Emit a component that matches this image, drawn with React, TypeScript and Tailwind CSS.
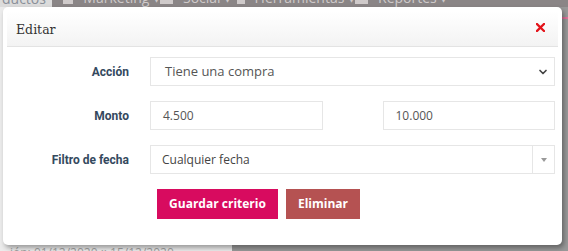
import { ChevronDown } from "lucide-react";

const navItems = [
  { label: "Marketing", w: "w-[97px]" },
  { label: "Social", w: "w-[77px]" },
  { label: "Herramientas", w: "w-[118px]" },
  { label: "Reportes", w: "w-[100px]" },
];

function Backdrop() {
  return (
    <div className="flex h-full flex-col">
      <div className="flex h-[7px] overflow-hidden">
        <div className="w-[52px] bg-[#dcdcdc]">
          <p className="-mt-[12px] pl-[2px] font-['Open_Sans',sans-serif] text-[14px] text-[#8a8f99]">
            ductos ▾
          </p>
        </div>
        <div className="flex flex-1 bg-[#8a8586] pl-[11px]">
          {navItems.map((item) => (
            <div
              key={item.label}
              className={`-mt-[12px] flex h-[19px] shrink-0 items-end gap-[10px] ${item.w} font-['Open_Sans',sans-serif] text-[14px] leading-[19px] text-[#cfcaca]`}
            >
              <span className="mb-[3px] h-[12px] w-[13px] bg-[#cfcaca]" />
              <span className="whitespace-nowrap">{item.label} ▾</span>
            </div>
          ))}
        </div>
        <div className="w-[6px] bg-[#8a8586]" />
      </div>
      <div className="flex flex-1">
        <div className="flex w-[232px] flex-col justify-end bg-[#ececec] font-['Open_Sans',sans-serif] text-[12px] text-[#a3a3a3]">
          <p className="-mb-[11px] whitespace-nowrap pl-[10px]">ión: 01/12/2020 :: 15/12/2020</p>
        </div>
        <div className="flex flex-1 flex-col items-end bg-[#999999]">
          <span className="mt-[10px] h-[2px] w-[6px] bg-[#e0739c]" />
        </div>
      </div>
    </div>
  );
}

export default function App() {
  return (
    <div className="relative h-[251px] w-[568px] overflow-hidden">
      <Backdrop />
      <div className="absolute left-[3px] top-[7px] flex h-[238px] w-[559px] flex-col rounded-[5px] bg-white shadow-[2px_3px_5px_rgba(0,0,0,0.35)]">
        <div className="mx-[4px] mt-[4px] flex h-[36px] items-center justify-between border-b border-[#e3e3e3] bg-gradient-to-b from-white to-[#f3f3f3] pl-[9px] pr-[13px]">
          <h2 className="mt-[3px] font-['DejaVu_Serif',serif] text-[12.5px] text-[#333]">Editar</h2>
          <svg width="9" height="9" viewBox="0 0 9 9" className="mt-[-3px]">
            <path d="M1 1 L8 8 M8 1 L1 8" stroke="#e3141b" strokeWidth="2.3" strokeLinecap="square" />
          </svg>
        </div>

        <div className="flex flex-col gap-[15px] pl-[4px] pr-[7px] pt-[10px] font-['Open_Sans',sans-serif]">
          <div className="flex items-center">
            <label className="w-[122px] text-right font-['Roboto',sans-serif] text-[12px] font-bold text-[#34495e]">
              Acción
            </label>
            <div className="ml-[21px] flex h-[29px] flex-1 items-center justify-between border border-[#e6e6e6] pl-[14px] pr-[5px]">
              <span className="text-[13px] text-[#555]">Tiene una compra</span>
              <ChevronDown className="h-[12px] w-[12px] text-[#444]" strokeWidth={3.4} />
            </div>
          </div>

          <div className="flex items-center">
            <label className="w-[122px] text-right font-['Roboto',sans-serif] text-[12px] font-bold text-[#34495e]">
              Monto
            </label>
            <div className="ml-[21px] grid flex-1 grid-cols-2 gap-[60px]">
              <div className="flex h-[29px] items-center border border-[#e6e6e6] pl-[12px] text-[12px] text-[#555]">
                4.500
              </div>
              <div className="flex h-[29px] items-center border border-[#e6e6e6] pl-[12px] text-[12px] text-[#555]">
                10.000
              </div>
            </div>
          </div>

          <div className="flex items-center">
            <label className="w-[122px] text-right font-['Roboto',sans-serif] text-[12px] font-bold text-[#34495e]">
              Filtro de fecha
            </label>
            <div className="ml-[21px] flex h-[29px] flex-1 border border-[#e6e6e6]">
              <span className="flex flex-1 items-center pl-[11px] text-[12px] text-[#444]">
                Cualquier fecha
              </span>
              <span className="flex w-[22px] items-center justify-center border-l border-[#e6e6e6]">
                <svg width="6" height="4" viewBox="0 0 6 4">
                  <path d="M0 0 H6 L3 4 Z" fill="#999" />
                </svg>
              </span>
            </div>
          </div>

          <div className="flex gap-[8px] pl-[150px]">
            <button className="h-[30px] w-[121px] bg-[#d80b5f] text-[12px] font-bold text-white">
              Guardar criterio
            </button>
            <button className="h-[30px] w-[74px] bg-[#b55252] text-[12px] font-bold text-white">
              Eliminar
            </button>
          </div>
        </div>
      </div>
    </div>
  );
}
